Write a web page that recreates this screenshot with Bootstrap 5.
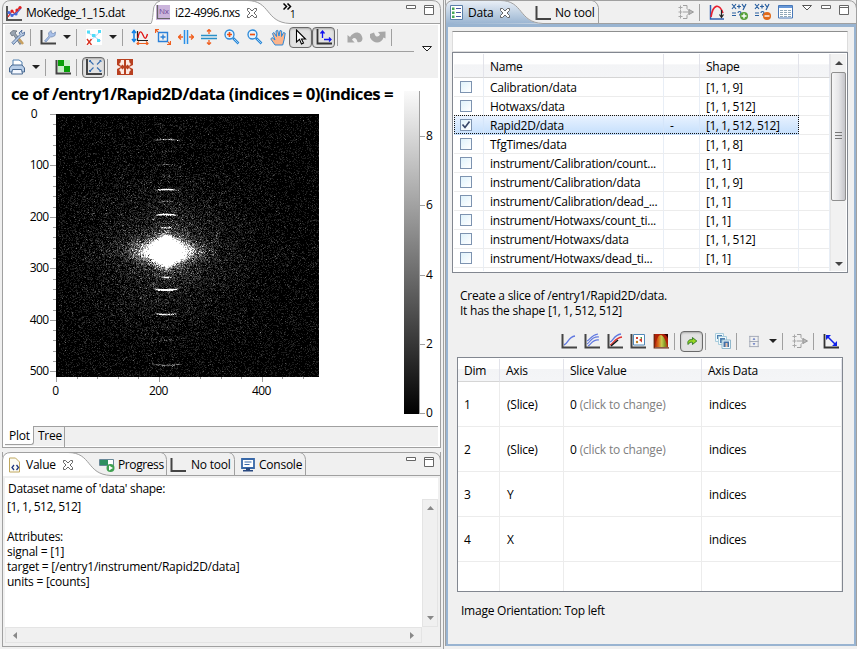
<!DOCTYPE html>
<html lang="en">
<head>
<meta charset="utf-8">
<title>Data viewer</title>
<link href="https://cdn.jsdelivr.net/npm/bootstrap@5.3.0/dist/css/bootstrap.min.css" rel="stylesheet">
<style>
body{width:857px;height:649px;overflow:hidden;background:#f0f0f0;font:12px/15px "Open Sans","Noto Sans",sans-serif;color:#000;letter-spacing:-.24px;white-space:nowrap}
svg{display:block;flex:none}
.left-col{width:441px;padding-left:2px}
.pane{border:1px solid #a0a0a0;border-top:0}
.pane-plot{height:448px;width:439px}
.pane-value{height:195px;width:439px;margin-top:4px}
.sash{width:2px;border-left:1px solid #a0a0a0;margin-left:2px}
.pane-data{width:412px;height:646px}
.tabs-strip{height:24px;margin:0 -1px}
.tabs-art{position:absolute;left:0;top:0;z-index:0}
.tab-item{position:relative;height:24px;display:flex;align-items:center;padding-top:1px}
.tab-close{margin-left:6px}
.tool-row{height:24px}
.ti{width:23px;height:24px;display:flex;align-items:center;justify-content:center;flex:none}
.ti.pressed{border:1.5px solid #6a6a6a;border-radius:4px;background:#e2e2e2;height:21px;box-shadow:inset 0 1px 2px #aaa}
.tc{width:15px;height:24px;display:flex;align-items:center;justify-content:center;flex:none}
.tc::after{content:"";border:4px solid transparent;border-top-color:#222;border-bottom:0}
.ts{width:8px;height:17px;flex:none;padding-left:2px}
.ts::before{content:"";display:block;width:1px;height:17px;background:#a0a0a0}
.tool-area{height:53px;margin:1px 2px 0;background:#f0f0f0}
.plot-area{height:348px}
.plot-area canvas{position:absolute;left:53px;top:36px}
.bottom-tabs{height:20px;margin:0 2px 0 2px;background:#f0f0f0;border-top:1px solid #a0a0a0}
.bt-on{width:29px;background:#fff;margin-top:-1px;border-right:1px solid #a0a0a0;border-bottom:1px solid #a0a0a0;border-radius:0 0 3px 0;height:19px;padding:2px 0 0 4px}
.bt-off{width:31px;border-right:1px solid #a0a0a0;height:20px;padding:1px 0 0 4px}
.value-body{margin:2px 2px 0;height:165px;background:#fff}
.sb{background:#f0f0f0;border:1px solid #e4e4e4}
.data-frame{border:2px solid #99b4d1;border-top-width:3px;height:622px;background:#f0f0f0;padding:4px 5px 0 4px}
.filter-box{height:21px;background:#fff;border:1px solid #dcdcdc;border-top:1px solid #8e8f8f;width:396px}
.grid-box{background:#fff;border:1px solid #828790;width:396px;height:221px;padding:1px}
.g1{display:grid;grid-template-columns:30px 180px 36px 99px 31px}
.g1>div,.g2>div{overflow:hidden}
.hd>div{background:linear-gradient(#fff 45%,#f3f4f6 46%,#f4f5f7);border-right:1px solid #e2e3ea;border-bottom:1px solid #d5d5d5}
.g1.hd>div{height:24px;padding:5px 0 0 6px}
.g1.rw>div{height:19px;padding:2px 0 0 6px;border-right:1px solid #e8eef6;border-bottom:1px solid #ececec}
.g1.rw>div:nth-child(4){letter-spacing:-.5px}
.g1.rw.sel>div:not(:last-child){background:linear-gradient(#e8f2ff,#c5dffc);border-right-color:#d4e5fa;border-bottom-color:#c5dffc}
.g1.rw{position:relative}
.sel::after{content:"";position:absolute;left:0;top:-1px;width:345px;height:19px;border:1px dotted #111;border-radius:1px}
.cbx{width:12px;height:12px;border:1px solid #7d93b0;background:linear-gradient(135deg,#dff2fb,#fff);margin-top:1px}
.vscroll{width:16px;height:217px;background:#f1f1f1;border-left:1px solid #e6e6e6}
.thumb{height:129px;width:15px;border:1px solid #8f8f8f;border-radius:2px;background:linear-gradient(90deg,#f6f6f6,#e6e6e8 50%,#c4c4c9)}
.slice-box{background:#fff;border:1px solid #828790;width:386px;height:235px;margin-left:5px;overflow:hidden;padding:1px 1px 0 0}
.g2{display:grid;grid-template-columns:42px 64px 138px 140px}
.g2.hd>div{height:23px;padding:4px 0 0 6px}
.g2.rw>div{height:45px;padding:15px 0 0 6px;border-right:1px solid #ececec;border-bottom:1px solid #ececec}
.g2.rw>div:nth-child(n+2){padding-left:7px}
.g2.rw>div:nth-child(3){padding-left:6px;letter-spacing:-.18px}
.hint{color:#808080}
.tight{letter-spacing:-.48px}
.ax{font-size:12px;letter-spacing:-.6px}
</style>
<script src="https://cdn.jsdelivr.net/npm/bootstrap@5.3.0/dist/js/bootstrap.bundle.min.js"></script>
</head>
<body class="d-flex m-0">
<svg width="0" height="0" class="position-absolute">
<defs>
<linearGradient id="gBlue" x1="0" y1="0" x2="0" y2="1"><stop offset="0" stop-color="#eaf0f7"/><stop offset="1" stop-color="#99b4d1"/></linearGradient>
<linearGradient id="gBar" x1="0" y1="0" x2="0" y2="1"><stop offset="0" stop-color="#fafafa"/><stop offset="1" stop-color="#000"/></linearGradient>
<linearGradient id="gHeat"><stop offset="0" stop-color="#a81808"/><stop offset=".3" stop-color="#d86818"/><stop offset=".55" stop-color="#c8cc50"/><stop offset=".75" stop-color="#88a028"/><stop offset="1" stop-color="#b03008"/></linearGradient>
<g id="axesL"><path d="M1.500 1V14.500H16" fill="none" stroke="#444" stroke-width="2"/></g>
<symbol id="i-x" viewBox="0 0 12 12"><path d="M1.500 1.500h2l2.500 2.500 2.500-2.500h2v2L8 6l2.500 2.500v2h-2L6 8l-2.500 2.500h-2v-2L4 6 1.500 3.500z" fill="#fff" stroke="#666"/></symbol>
<symbol id="i-curves" viewBox="0 0 16 16"><path d="M1 1v14h15" fill="none" stroke="#555" stroke-width="2"/><path d="M2 12l4-6 3 3 2-4 4-3" fill="none" stroke="#e02020" stroke-width="1.300"/><path d="M2 7l4 3 4-1 5-6" fill="none" stroke="#4468d8" stroke-width="1.300"/><circle cx="3" cy="7.500" r="1.600" fill="#4468d8"/><circle cx="6" cy="10.500" r="1.600" fill="#4468d8"/><circle cx="10" cy="9" r="1.600" fill="#4468d8"/><circle cx="6" cy="6" r="1.600" fill="#e02020"/><circle cx="11" cy="5" r="1.600" fill="#e02020"/><circle cx="14" cy="2.500" r="1.600" fill="#e02020"/></symbol>
<symbol id="i-tools" viewBox="0 0 16 16"><path d="M1 4l3-2.500 4 .5-2 2 7 9-2 2.500L4.500 6 3 7z" fill="#9aa4b0" stroke="#5a6470" stroke-width=".7"/><path d="M13 1l-3 3 1 1.500-8 8 1.500 2L12.500 7l2.500-.5L16 3l-2.500 1.500L12.500 3z" fill="#b8cbe4" stroke="#3f5f90" stroke-width=".8"/><path d="M10 10l4 5" stroke="#c8a060" stroke-width="2.500"/></symbol>
<symbol id="i-axwrench" viewBox="0 0 16 16"><use href="#axesL"/><path d="M4.500 12l4.500-5-.5-3L11 1.500l.5 2.500 2 .5L15.500 3l-.5 3.500L12 8l-1.500-.2L6 13z" fill="#a8c0e8" stroke="#7890b8" stroke-width=".8"/></symbol>
<symbol id="i-scatter" viewBox="0 0 16 16"><rect width="16" height="16" fill="#fff"/><path d="M1 3l14 9M3 13L15 2" stroke="#a0c8f0" stroke-width=".8"/><path d="M6 5h3.500v3H6zM1 1.500h3v3H1zM11 10h3v3h-3zM12 1h3v3h-3z" fill="#50dcf8"/><path d="M1 10l4.500 6M5.500 10L1 16" stroke="#d83020" stroke-width="1.300"/></symbol>
<symbol id="i-redwave" viewBox="0 0 18 16"><path d="M3 2v10M1 4l2-2.500L5 4M1 10l2 2.500L5 10" stroke="#1080e8" fill="none" stroke-width="1.500"/><path d="M6.500 2v9.500H17" stroke="#222" fill="none" stroke-width="1.200"/><path d="M7 9C8 2 10 1 12 6s3 4 4.500-1" stroke="#e01010" fill="none" stroke-width="1.300"/><path d="M6 14.500h11M8 12.500l-2 2 2 2M15 12.500l2 2-2 2" stroke="#f06020" fill="none" stroke-width="1.200"/></symbol>
<symbol id="i-zoomrect" viewBox="0 0 16 16"><path d="M3.500 3.500h9v9h-9zM8 5.500v5M5.500 8h5" stroke="#2a80d8" fill="none" stroke-width="1.400"/><path d="M.5 4V.5H4M.5.500l2.500 2.500M12 15.500h3.500V12M15.500 15.500L13 13" stroke="#f06020" fill="none" stroke-width="1.200"/></symbol>
<symbol id="i-expx" viewBox="0 0 16 16"><path d="M6.500 1v14M9.500 1v14" stroke="#2a90e8" stroke-width="1.500"/><path d="M0 8h5M11 8h5M3 5.500L.5 8 3 10.500M13 5.500L15.500 8 13 10.500" fill="none" stroke="#f06020" stroke-width="1.300"/></symbol>
<symbol id="i-arrin" viewBox="0 0 16 16"><path d="M0 6.500h16M0 9.500h16" stroke="#2a90c8" stroke-width="1.500"/><path d="M8 0v5M8 11v5M6 2.500L8 .5l2 2M6 13.500l2 2 2-2" fill="none" stroke="#f06020" stroke-width="1.300"/></symbol>
<symbol id="i-zin" viewBox="0 0 16 16"><path d="M9 9l5.500 5.500" stroke="#2a88d8" stroke-width="2.500"/><path d="M10 10l4 4" stroke="#b8dcf8" stroke-width=".8"/><circle cx="5.500" cy="5.500" r="4.500" fill="#e6f4ff" stroke="#2a88d8" stroke-width="1.300"/><path d="M3 5.500h5M5.500 3v5" stroke="#f05010" stroke-width="1.700"/></symbol>
<symbol id="i-zout" viewBox="0 0 16 16"><path d="M9 9l5.500 5.500" stroke="#2a88d8" stroke-width="2.500"/><path d="M10 10l4 4" stroke="#b8dcf8" stroke-width=".8"/><circle cx="5.500" cy="5.500" r="4.500" fill="#e6f4ff" stroke="#2a88d8" stroke-width="1.300"/><path d="M3 5.500h5" stroke="#f05010" stroke-width="1.700"/></symbol>
<symbol id="i-hand" viewBox="0 0 16 16"><path d="M5 15.500L.8 9.500 2 8l3 2.500L2.500 4 4 3l2.500 4L6 1.500 7.700.8 9 6.500 10 1l1.700.5L11.500 7l2-4 1.700.7-1 6.300-1.500 5.500z" fill="#fbb48c" stroke="#2a88d8"/></symbol>
<symbol id="i-ptr" viewBox="0 0 12 16"><path d="M1.500 1v12l3-2.700L6.500 15l2-1-2-4h4z" fill="#fff" stroke="#000" stroke-width="1.100"/></symbol>
<symbol id="i-axblue" viewBox="0 0 16 16"><path d="M1.500 0V14.500H16" fill="none" stroke="#333" stroke-width="1.800"/><path d="M6.500 9V2M4.500 4.500l2-2.500 2 2.500M8 10.500h7M13 8.500l2 2-2 2" stroke="#1010f0" fill="none" stroke-width="1.300"/></symbol>
<symbol id="i-undo" viewBox="0 0 16 14"><path d="M.5 5v7.500h7.200L5 9.800c1.500-3 4.500-2.500 5.500 2.200 3 .8 5-1 5-3.500C14.500 1 7 .5 3 7z" fill="#a8a8a8"/></symbol>
<symbol id="i-redo" viewBox="0 0 16 14"><path d="M15.500 1.500v7L13.500 7.500c-2 6.500-10 7-13.500 0L0 4l4-1.500 1 2.500c1.500 2.500 4 1.500 5-.5L8 2z" fill="#a8a8a8"/></symbol>
<symbol id="i-print" viewBox="0 0 16 16"><path d="M4 7V1h6l3 2v4" fill="#fff" stroke="#5080b0"/><path d="M3 6h10l2.500 3v4H.5V9z" fill="#b8cee8" stroke="#486890"/><path d="M3.500 10.500h9l1 4.500h-11z" fill="#f4f8ff" stroke="#486890"/></symbol>
<symbol id="i-green" viewBox="0 0 16 16"><path d="M3 1h12v12H3z" fill="#c8f0c8"/><path d="M3 1h6v6H3zM9 7h6v6H9z" fill="#08a008"/><use href="#axesL"/></symbol>
<symbol id="i-fit" viewBox="0 0 18 18"><path d="M2 1v15h15" fill="none" stroke="#444" stroke-width="2"/><path d="M5 3l3.500 3.500M15.500 3L12 6.500M5 13l3.500-3.500M15.500 13L12 9.500" fill="none" stroke="#3a70b0" stroke-width="1.100"/><path d="M4.500 4V2.500H6M14.500 2.500H16V4M4.500 12v1.500H6M14.500 13.500H16V12" fill="none" stroke="#3a70b0"/></symbol>
<symbol id="i-redfit" viewBox="0 0 16 16"><path d="M0 0h16v16H0z" fill="#b84020"/><path d="M4 1h3v6L5.500 5.500 4 7 2 5l1.500-1.500zM12 1H9v6l1.500-1.500L12 7l2-2-1.500-1.500zM4 15h3V9l-1.500 1.500L4 9l-2 2 1.500 1.500zM12 15H9V9l1.500 1.500L12 9l2 2-1.500 1.500zM0 6l4 2-4 2zM16 6l-4 2 4 2z" fill="#fbeae4"/></symbol>
<symbol id="i-valdoc" viewBox="0 0 16 16"><path d="M2.500 1h6l4 4v10h-10z" fill="#fdfcf4" stroke="#c0a860"/><path d="M7 8l-2 2.500L7 13M9.500 8l2 2.500-2 2.500" stroke="#203880" fill="none" stroke-width="1.300"/></symbol>
<symbol id="i-prog" viewBox="0 0 16 16"><path d="M.5 2.500h14v6H.5z" fill="#fff" stroke="#688898"/><path d="M1 3h8v5H1z" fill="#2e9060"/><circle cx="11.500" cy="11" r="4" fill="#3fa050"/><path d="M10 8.500l4 2.500-4 2.500z" fill="#fff"/></symbol>
<symbol id="i-L" viewBox="0 0 16 16"><path d="M1.500 1v13H16" fill="none" stroke="#444" stroke-width="2"/></symbol>
<symbol id="i-console" viewBox="0 0 14 14"><path d="M1 1h12v9H1z" fill="#fff" stroke="#3868a8" stroke-width="1.800"/><path d="M3.500 4h7M3.500 6.500h5" stroke="#3868a8"/><path d="M5 10h4v2h3v1.500H2V12h3z" fill="#284880"/></symbol>
<symbol id="i-list" viewBox="0 0 14 16"><path d="M.5.500h12v14H.5z" fill="#fff" stroke="#5a7fa8"/><path d="M2 2.500h2.500V5H2zM2 6.500h2.500V9H2zM2 10.500h2.500V13H2z" fill="#48a858"/><path d="M6 3.500h5M6 7.500h5M6 11.500h5" stroke="#4858a0"/></symbol>
<symbol id="i-flow" viewBox="0 0 16 16"><path d="M.5 3.500h4M2.500 1.500v4M.5 8h4M2.500 6v4M.5 12.500h4M2.500 10.500v4" stroke="#a8a8a8" fill="none"/><path d="M5 1.500h4v3l3 3M5 14.500h4v-3l3-3M5 8h7" stroke="#a0a0a0" fill="none"/><path d="M11 5.500L15.500 8 11 10.500z" fill="#b8b8b8" stroke="#989898"/></symbol>
<symbol id="i-fitc" viewBox="0 0 16 16"><path d="M1.500 1v14H15" stroke="#3060b0" stroke-width="1.500" fill="none"/><path d="M2 13C4 0 10-1 14 9" stroke="#e82030" stroke-width="1.600" fill="none"/><path d="M12.500 6v7M10.500 10.500l2 3 2-3" stroke="#222" stroke-width="1.200" fill="none"/></symbol>
<symbol id="i-xy" viewBox="0 0 16 16"><path d="M1 1l4 5M5 1L1 6M6 3.500h4M8 1.500v4M11 1l2 3M15 1l-3 6M1 10h4M1 12.500h4M7 10c0-2 3-2 3 0 0 1-1.500 1-1.500 2.500" stroke="#2a60a0" stroke-width="1.200" fill="none"/></symbol>
<symbol id="i-tbl" viewBox="0 0 15 14"><path d="M.5.500h14v12.500H.5z" fill="#fff" stroke="#4878b8"/><path d="M1 1h13v2H1z" fill="#6898d8"/><path d="M2 5.500h11M2 7.500h11M2 9.500h11M2 11.500h11" stroke="#90a8b8" stroke-dasharray="3 1"/></symbol>
<symbol id="i-c1" viewBox="0 0 16 16"><use href="#axesL"/><path d="M3 12c4-1 4-8 11-9" stroke="#6078e0" fill="none" stroke-width="1.300"/></symbol>
<symbol id="i-c2" viewBox="0 0 16 16"><use href="#axesL"/><path d="M3 8c3-1 4-6 11-7M3 11c3-1 4-8 12-7M4 13c3-1 4-7 11-6" stroke="#6078e0" fill="none" stroke-width="1.200"/></symbol>
<symbol id="i-c3" viewBox="0 0 16 16"><use href="#axesL"/><path d="M3 9c3-1 4-7 11-8" stroke="#6078e0" fill="none" stroke-width="1.300"/><path d="M3 12c3-1 5-7 12-8" stroke="#e03030" fill="none" stroke-width="1.300"/><path d="M4 13l7-6" stroke="#111" stroke-width="1.500"/></symbol>
<symbol id="i-im" viewBox="0 0 16 16"><path d="M3.500 1.500h11v10.500h-11z" fill="#fff" stroke="#5088b8"/><path d="M6 4h2v2H6zM9 7l3-2.500v5z" fill="#d04030"/><circle cx="7" cy="9" r="1.200" fill="#c08020"/><path d="M10 4h2v2z" fill="#38a050"/><use href="#axesL"/></symbol>
<symbol id="i-surf" viewBox="0 0 16 16"><path d="M1 1h14v13H1z" fill="#b02008"/><path d="M1 14c2-2 3-12 6.500-12S13 9 15 14z" fill="url(#gHeat)"/><path d="M10.500 1H15v5c-1-3-2-4-4.500-5z" fill="#300"/><path d="M1.200 1v13.800H16" fill="none" stroke="#6a2810" stroke-width="1.200"/></symbol>
<symbol id="i-go" viewBox="0 0 16 16"><path d="M3.500 12c-1-4 1-6 5-5.500V4l5 4-5 4V9.500c-2-.5-3.500 0-5 2.500z" fill="#98d820" stroke="#287020"/></symbol>
<symbol id="i-stack" viewBox="0 0 16 16"><path d="M.5.500h8v8h-8z" fill="#eef8fc" stroke="#a8ccdc"/><path d="M2 2h5v4H2z" fill="#5080b0"/><path d="M3.500 3.500h8v8h-8z" fill="#eef8fc" stroke="#a8ccdc"/><path d="M5 5h5v5H5z" fill="#5080b0"/><path d="M7 7h8.500v8.500H7z" fill="#eef8fc" stroke="#90b8cc"/><path d="M8.500 8.500H14V14H8.500z" fill="#4070a8"/><path d="M10.500 10h2v4h-2z" fill="#e8c0a8"/></symbol>
<symbol id="i-cab" viewBox="0 0 12 14"><path d="M1.500 1v12M10.500 1v12M1 1.500h10M1 7h10M1 12.500h10" stroke="#a0a6b4" fill="none"/><path d="M6 3l1.500 2h-3zM4.500 9h3L6 11z" fill="#5870c0"/></symbol>
<symbol id="i-diag" viewBox="0 0 16 16"><path d="M1.500 1v13.500H16" fill="none" stroke="#333" stroke-width="1.800"/><path d="M4 3l9 9" stroke="#1020e8" stroke-width="1.500"/><path d="M3 2h5L3 7zM14 13H9l5-5z" fill="#1020e8"/></symbol>
<symbol id="i-min" viewBox="0 0 10 4"><path d="M.5.500h9v3h-9z" fill="#fff" stroke="#666"/></symbol>
<symbol id="i-max" viewBox="0 0 10 10"><path d="M.5.500h9v9h-9zM0 2.500h10" fill="#fff" stroke="#666"/></symbol>
</defs>
</svg>

<div class="left-col">
  <section class="pane pane-plot bg-white">
    <div class="tabs-strip position-relative d-flex">
      <svg class="tabs-art" width="439" height="24"><path d="M0 0h439v24H0z" fill="#f0f0f0"/><path d="M148.500 24V23c2-3 2-14 3-17q2-5 7-5H245c24 0 17 22 43 22H439v1z" fill="#fff"/><path d="M.5 24V8Q1 .5 9 .5H430q8 0 8.500 8V24M0 23.500H149c2-3 2-14 3-17q2-5 6-5.500M245 .5c24 0 18 22 43 23H439" fill="none" stroke="#a0a0a0"/></svg>
      <div class="tab-item" style="padding-left:4px"><svg width="16" height="16"><use href="#i-curves"/></svg><span class="ps-1" style="letter-spacing:-.4px">MoKedge_1_15.dat</span></div>
      <div class="tab-item position-absolute" style="left:154px"><svg width="14" height="15" viewBox="0 0 14 15"><path d="M0 0h14v15H0z" fill="#cbb4dc"/><path d="M1.500 0v13.500H14" fill="none" stroke="#666" stroke-width="1.200"/><text x="3" y="9" font-size="8" letter-spacing="-.3" fill="#704898">Nx</text></svg><span class="tight" style="margin-left:5px">i22-4996.nxs</span><svg width="12" height="12" class="tab-close"><use href="#i-x"/></svg></div>
      <div class="tab-item position-absolute" style="left:281px;padding-top:0"><svg width="9" height="7" viewBox="0 0 9 7" style="margin-top:-12px"><path d="M.5.500l3 3-3 3M4.500.500l3 3-3 3" fill="none" stroke="#000" stroke-width="1.500"/></svg><span style="font-size:10px;margin:5px 0 0 -2px">1</span></div>
      <div class="position-absolute d-flex gap-2" style="left:404px;top:5px"><svg width="10" height="4"><use href="#i-min"/></svg><svg width="10" height="10"><use href="#i-max"/></svg></div>
    </div>
    <div class="tool-area position-relative">
      <div class="tool-row d-flex align-items-center">
        <div class="ti"><svg width="16" height="16"><use href="#i-tools"/></svg></div><i class="ts"></i>
        <div class="ti"><svg width="16" height="16"><use href="#i-axwrench"/></svg></div><i class="tc"></i><i class="ts"></i>
        <div class="ti"><svg width="16" height="16"><use href="#i-scatter"/></svg></div><i class="tc"></i><i class="ts"></i>
        <div class="ti"><svg width="18" height="16"><use href="#i-redwave"/></svg></div>
        <div class="ti"><svg width="16" height="16"><use href="#i-zoomrect"/></svg></div>
        <div class="ti"><svg width="16" height="16"><use href="#i-expx"/></svg></div>
        <div class="ti"><svg width="16" height="16"><use href="#i-arrin"/></svg></div>
        <div class="ti"><svg width="16" height="16"><use href="#i-zin"/></svg></div>
        <div class="ti"><svg width="16" height="16"><use href="#i-zout"/></svg></div>
        <div class="ti"><svg width="16" height="17"><use href="#i-hand"/></svg></div>
        <div class="ti pressed"><svg width="12" height="16"><use href="#i-ptr"/></svg></div>
        <div class="ti pressed"><svg width="16" height="16"><use href="#i-axblue"/></svg></div><i class="ts"></i>
        <div class="ti"><svg width="16" height="14"><use href="#i-undo"/></svg></div>
        <div class="ti"><svg width="16" height="14"><use href="#i-redo"/></svg></div><i class="ts"></i>
      </div>
      <div style="width:408px;height:5px;border-top:1px solid #a0a0a0;margin-top:2px;margin-left:1px"></div>
      <svg class="position-absolute" width="10" height="6" style="left:417px;top:21px"><path d="M.5.500h9L5 5z" fill="#fff" stroke="#222"/></svg>
      <div class="tool-row d-flex align-items-center" style="height:22px">
        <div class="ti"><svg width="16" height="16"><use href="#i-print"/></svg></div><i class="tc"></i><i class="ts"></i>
        <div class="ti"><svg width="16" height="16"><use href="#i-green"/></svg></div><i class="ts"></i>
        <div class="ti pressed"><svg width="18" height="18"><use href="#i-fit"/></svg></div><i class="ts"></i>
        <div class="ti"><svg width="16" height="16"><use href="#i-redfit"/></svg></div>
      </div>
    </div>
    <div class="plot-area position-relative">
      <svg id="axes" width="437" height="348" viewBox="3 78 437 348" class="ax">
        <text x="11" y="100" font-size="15.5" font-weight="700" textLength="382" lengthAdjust="spacingAndGlyphs" letter-spacing="-.5">ce of /entry1/Rapid2D/data (indices = 0)(indices =</text>
        <rect x="404" y="91" width="15" height="323" fill="url(#gBar)"/>
        <path d="M419.500 91V414" stroke="#a0a0a0"/>
      </svg>
      <canvas id="img" width="263" height="263"></canvas>
    </div>
    <div class="bottom-tabs d-flex"><div class="bt-on">Plot</div><div class="bt-off">Tree</div></div>
  </section>

  <section class="pane pane-value">
    <div class="tabs-strip position-relative">
      <svg class="tabs-art" width="439" height="24"><path d="M0 24V8Q1 .5 9 .5H66c24 0 18 23 43 23z" fill="#fff"/><path d="M.5 24V8Q1 .5 9 .5H430q8 0 8.500 8V24M66 .5c24 0 18 22 43 23H439M159 .5q5 1 5.500 7V23M227 .5q5 1 5.500 7V23M298 .5q5 1 5.500 7V23" fill="none" stroke="#a0a0a0"/></svg>
      <div class="tab-item position-absolute" style="left:5px"><svg width="16" height="16"><use href="#i-valdoc"/></svg><span style="margin-left:3px">Value</span><svg width="12" height="12" class="tab-close"><use href="#i-x"/></svg></div>
      <div class="tab-item position-absolute" style="left:97px"><svg width="16" height="16"><use href="#i-prog"/></svg><span style="margin-left:3px;letter-spacing:-.4px">Progress</span></div>
      <div class="tab-item position-absolute" style="left:168px"><svg width="16" height="16"><use href="#i-L"/></svg><span style="margin-left:5px">No tool</span></div>
      <div class="tab-item position-absolute" style="left:239px"><svg width="14" height="14"><use href="#i-console"/></svg><span style="margin-left:4px">Console</span></div>
      <div class="position-absolute d-flex gap-2" style="left:404px;top:5px"><svg width="10" height="4"><use href="#i-min"/></svg><svg width="10" height="10"><use href="#i-max"/></svg></div>
    </div>
    <div class="value-body d-flex flex-column">
      <div style="height:21px;padding:3px 0 0 3px;letter-spacing:-.3px">Dataset name of 'data' shape:</div>
      <div class="d-flex" style="height:129px">
        <div class="flex-grow-1" style="padding-left:2px"><span class="tight">[1, 1, 512, 512]</span><br><br>Attributes:<br>signal = [1]<br>target = [/entry1/instrument/Rapid2D/data]<br>units = [counts]</div>
        <div class="sb d-flex flex-column justify-content-between align-items-center" style="width:16px;padding:5px 0"><svg width="7" height="5"><path d="M0 5L3.500 1 7 5z" fill="#888"/></svg><svg width="7" height="5"><path d="M0 0h7L3.500 4z" fill="#888"/></svg></div>
      </div>
      <div class="d-flex" style="background:#f0f0f0"><div class="sb d-flex justify-content-between align-items-center" style="height:16px;width:417px;padding:0 6px"><svg width="5" height="7"><path d="M5 0v7L1 3.500z" fill="#888"/></svg><svg width="5" height="7"><path d="M0 0v7l4-3.500z" fill="#888"/></svg></div></div>
    </div>
  </section>
</div>

<div class="sash"></div>

<section class="pane-data pane">
  <div class="tabs-strip position-relative">
    <svg class="tabs-art" width="412" height="24"><path d="M0 24V8Q1 .5 9 .5H55c24 0 18 23 43 23z" fill="url(#gBlue)"/><path d="M.5 24V8Q1 .5 9 .5H403q8 0 8.500 8V24M55 .5c24 0 18 22 43 23H412M147 .5q5 1 6.500 7V23" fill="none" stroke="#a0a0a0"/></svg>
    <div class="tab-item position-absolute" style="left:5px"><svg width="14" height="16"><use href="#i-list"/></svg><span style="margin-left:4px">Data</span><svg width="12" height="12" class="tab-close"><use href="#i-x"/></svg></div>
    <div class="tab-item position-absolute" style="left:90px"><svg width="16" height="16"><use href="#i-L"/></svg><span style="margin-left:4px">No tool</span></div>
    <div class="position-absolute d-flex align-items-center" style="left:229px;top:0">
      <div class="ti"><svg width="16" height="16"><use href="#i-flow"/></svg></div><i class="ts"></i>
      <div class="ti"><svg width="16" height="16"><use href="#i-fitc"/></svg></div>
      <div class="ti"><svg width="18" height="18" viewBox="0 0 18 18"><use href="#i-xy" width="16" height="16"/><circle cx="13" cy="13" r="4" fill="#58a038"/><path d="M10.500 13h5M13 10.500v5" stroke="#fff" stroke-width="1.400"/></svg></div>
      <div class="ti"><svg width="18" height="18" viewBox="0 0 18 18"><use href="#i-xy" width="16" height="16"/><circle cx="13" cy="13" r="4" fill="#e06818"/><path d="M10.500 13h5" stroke="#fff" stroke-width="1.400"/></svg></div>
      <div class="ti"><svg width="15" height="14"><use href="#i-tbl"/></svg></div>
    </div>
    <div class="position-absolute d-flex" style="left:357px;top:5px;gap:9px"><svg width="10" height="6"><path d="M.5.500h9L5 5z" fill="#fff" stroke="#555"/></svg><svg width="10" height="4"><use href="#i-min"/></svg><svg width="10" height="10" style="margin-left:-1px"><use href="#i-max"/></svg></div>
  </div>
  <div class="data-frame">
    <div class="filter-box"></div>
    <div class="grid-box d-flex">
      <div id="names" style="width:376px;height:217px;overflow:hidden">
        <div class="g1 hd"><div></div><div>Name</div><div></div><div>Shape</div><div></div></div>
      </div>
      <div class="vscroll d-flex flex-column align-items-center"><svg width="8" height="18"><path d="M0 11l4-4 4 4z" fill="#444"/></svg>
        <div class="thumb d-flex align-items-center justify-content-center"><svg width="7" height="9"><path d="M0 .5h7M0 3.500h7M0 6.500h7" stroke="#777"/></svg></div>
        <svg width="8" height="6" class="mt-auto mb-1"><path d="M0 1h8L4 5z" fill="#444"/></svg></div>
    </div>
    <div style="margin:15px 0 0 8px;height:43px">Create a slice of /entry1/Rapid2D/data.<br>It has the shape <span class="tight">[1, 1, 512, 512]</span></div>
    <div class="d-flex align-items-center" style="margin-left:105px;height:24px;margin-bottom:4px;margin-top:-2px">
      <div class="ti"><svg width="16" height="16"><use href="#i-c1"/></svg></div>
      <div class="ti"><svg width="16" height="16"><use href="#i-c2"/></svg></div>
      <div class="ti"><svg width="16" height="16"><use href="#i-c3"/></svg></div>
      <div class="ti"><svg width="16" height="16"><use href="#i-im"/></svg></div>
      <div class="ti"><svg width="16" height="16"><use href="#i-surf"/></svg></div><i class="ts"></i>
      <div class="ti pressed"><svg width="14" height="14"><use href="#i-go"/></svg></div><i class="ts"></i>
      <div class="ti"><svg width="16" height="16"><use href="#i-stack"/></svg></div><i class="ts"></i>
      <div class="ti"><svg width="12" height="13"><use href="#i-cab"/></svg></div><i class="tc"></i><i class="ts"></i>
      <div class="ti"><svg width="16" height="16"><use href="#i-flow"/></svg></div><i class="ts"></i>
      <div class="ti"><svg width="16" height="16"><use href="#i-diag"/></svg></div>
    </div>
    <div class="slice-box">
      <div class="g2 hd"><div>Dim</div><div>Axis</div><div>Slice Value</div><div>Axis Data</div></div>
      <div class="g2 rw"><div>1</div><div>(Slice)</div><div>0 <span class="hint">(click to change)</span></div><div>indices</div></div>
      <div class="g2 rw"><div>2</div><div>(Slice)</div><div>0 <span class="hint">(click to change)</span></div><div>indices</div></div>
      <div class="g2 rw"><div>3</div><div>Y</div><div></div><div>indices</div></div>
      <div class="g2 rw"><div>4</div><div>X</div><div></div><div>indices</div></div>
      <div class="g2 rw"><div></div><div></div><div></div><div></div></div>
    </div>
    <div style="margin:11px 0 0 9px">Image Orientation: Top left</div>
  </div>
</section>

<script>
// Dataset rows: name, shape, checked
const rows=[['Calibration/data','[1, 1, 9]'],['Hotwaxs/data','[1, 1, 512]'],['Rapid2D/data','[1, 1, 512, 512]',1],['TfgTimes/data','[1, 1, 8]'],['instrument/Calibration/count...','[1, 1]'],['instrument/Calibration/data','[1, 1, 9]'],['instrument/Calibration/dead_...','[1, 1]'],['instrument/Hotwaxs/count_ti...','[1, 1]'],['instrument/Hotwaxs/data','[1, 1, 512]'],['instrument/Hotwaxs/dead_ti...','[1, 1]'],['','']];
document.getElementById('names').insertAdjacentHTML('beforeend',rows.map(([n,s,c])=>`<div class="g1 rw${c?' sel':''}"><div>${n?`<div class="cbx">${c?'<svg width="10" height="10"><path d="M1.500 4.500l2.500 3 4.500-6" fill="none" stroke="#38486a" stroke-width="1.700"/></svg>':''}</div>`:''}</div><div>${n}</div><div>${c?'-':''}</div><div>${s}</div><div></div></div>`).join(''));

// Axis ticks and labels
let a='';
const line=(x1,y1,x2,y2)=>`<path d="M${x1} ${y1}L${x2} ${y2}" stroke="#a0a0a0"/>`;
for(let v=0;v<=500;v+=20){const y=Math.round(114+v*.5145)+.5,m=v%100===0;a+=line(m?50:53,y,56,y);if(m)a+=`<text x="${v?48.5:37}" y="${y+3.5}" text-anchor="end">${v}</text>`}
for(let v=0;v<=480;v+=40){const x=Math.round(56+v*.5145)+.5,m=v%200===0;a+=line(x,377,x,m?382:379);if(m)a+=`<text x="${x-1}" y="395" text-anchor="middle">${v}</text>`}
[0,2,4,6,8].forEach(v=>{const y=Math.round(413-v*34.6)+.5;a+=line(420,y,425,y)+`<text x="426" y="${y+3.5}">${v}</text>`});
document.getElementById('axes').insertAdjacentHTML('beforeend',a);

// Detector image: photon counts drawn from a seeded generator
const cv=document.getElementById('img'),cx=cv.getContext('2d'),N=263,im=cx.createImageData(N,N);
let s=12345;const rnd=()=>{s=(s*1664525+1013904223)>>>0;return s/4294967296};
// Diffraction arcs: row, half width, peak counts
const arcs=[[11,9,.6],[25,12,4],[37,9,.8],[50,10,2],[62,8,1],[75,9,14],[87,8,2.500],[100,8,20],[113,5,9],[163,4,12],[175.500,9,24],[200,9,10],[213,8,.8],[226,13,1.500],[251,13,4]];
const poi=l=>{if(l>30)return 30;let L=Math.exp(-l),k=0,p=1;do{k++;p*=rnd()}while(p>L);return k-1};
for(let y=0;y<N;y++)for(let x=0;x<N;x++){
  const dx=x-110,dy=y-137,ax=Math.abs(dx),ay=Math.abs(dy);
  const q=Math.pow(ax/22,.75)+Math.pow(ay/17,1.8),r=Math.hypot(dx/1.1,dy);
  let l=.2+.8*Math.exp(-r/55)+2.600*Math.exp(-r/22)+13*Math.exp(-(q-.85)*3.6)+1.1*Math.exp(-ax/30-ay/6);
  for(const [yy,w,h] of arcs){const c=yy+(yy<137?1:-1)*dx*dx/140;l+=h*Math.exp(-Math.pow((y-c)/.75,2)-Math.pow(dx/w,4)*.8)}
  const v=x<2||y<2?0:Math.min(255,poi(l)*27),i=(y*N+x)*4;
  im.data[i]=im.data[i+1]=im.data[i+2]=v;im.data[i+3]=255}
cx.putImageData(im,0,0);
</script>
</body>
</html>
